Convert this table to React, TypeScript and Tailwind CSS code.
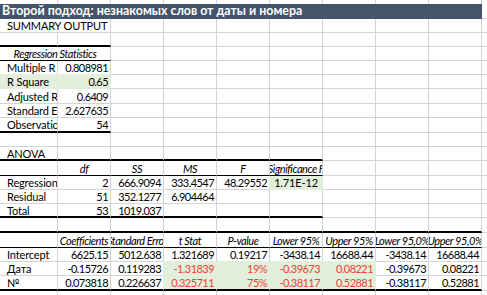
import React from "react";

// column widths: A..J (the last one is cut by the window)
const widths = [58, 53, 53, 53, 53, 53, 53, 53, 53, 53];

type Cell = {
  t?: string;
  a?: "l" | "r" | "c";
  i?: boolean;
  g?: boolean;
  red?: boolean;
  span?: number;
};

type Row = {
  h: number;
  cells: Cell[];
  line?: "thick" | "thin";
  lineTo?: number; // number of columns the black line covers
};

const R = (...v: string[]): Cell[] => v.map((t, idx) => ({ t, a: idx === 0 ? "l" : "r" }));

const rows: Row[] = [
  { h: 14, cells: [{ t: "SUMMARY OUTPUT", span: 2 }] },
  { h: 14, cells: [], line: "thick", lineTo: 2 },
  { h: 14, cells: [{ t: "Regression Statistics", a: "c", i: true, span: 2 }], line: "thin", lineTo: 2 },
  { h: 14, cells: R("Multiple R", "0.808981") },
  { h: 14, cells: R("R Square", "0.65").map((c) => ({ ...c, g: true })) },
  { h: 15, cells: R("Adjusted R Square", "0.6409") },
  { h: 14, cells: R("Standard Error", "2.627635") },
  { h: 15, cells: R("Observations", "54"), line: "thick", lineTo: 2 },
  { h: 14, cells: [] },
  { h: 14, cells: [{ t: "ANOVA" }], line: "thick", lineTo: 6 },
  {
    h: 15,
    cells: [{}, ...["df", "SS", "MS", "F", "Significance F"].map((t) => ({ t, a: "c" as const, i: true }))],
    line: "thin",
    lineTo: 6,
  },
  {
    h: 14,
    cells: [...R("Regression", "2", "666.9094", "333.4547", "48.29552"), { t: "1.71E-12", a: "c", g: true }],
  },
  { h: 14, cells: R("Residual", "51", "352.1277", "6.904464") },
  { h: 14, cells: R("Total", "53", "1019.037"), line: "thick", lineTo: 6 },
  { h: 15, cells: [], line: "thick", lineTo: 9 },
  {
    h: 15,
    cells: [
      {},
      ...["Coefficients", "Standard Error", "t Stat", "P-value", "Lower 95%", "Upper 95%", "Lower 95,0%", "Upper 95,0%"].map(
        (t) => ({ t, a: "c" as const, i: true })
      ),
    ],
    line: "thin",
    lineTo: 9,
  },
  {
    h: 14,
    cells: R("Intercept", "6625.15", "5012.638", "1.321689", "0.19217", "-3438.14", "16688.44", "-3438.14", "16688.44"),
  },
  {
    h: 14,
    cells: R("Дата", "-0.15726", "0.119283", "-1.31839", "19%", "-0.39673", "0.08221", "-0.39673", "0.08221").map(
      (c, idx) => (idx >= 3 && idx <= 6 ? { ...c, g: true, red: true } : c)
    ),
  },
  {
    h: 15,
    cells: R("№", "0.073818", "0.226637", "0.325711", "75%", "-0.38117", "0.52881", "-0.38117", "0.52881").map(
      (c, idx) => (idx >= 3 && idx <= 6 ? { ...c, g: true, red: true } : c)
    ),
    line: "thick",
    lineTo: 9,
  },
  { h: 14, cells: [] },
];

// expand spans into one entry per column
const layout = (cells: Cell[]) => {
  const out: { cell: Cell; col: number; w: number; n: number }[] = [];
  let col = 0;
  while (col < widths.length) {
    const cell = cells[out.length] ?? {};
    const n = cell.span ?? 1;
    const w = widths.slice(col, col + n).reduce((s, x) => s + x, 0);
    out.push({ cell, col, w, n });
    col += n;
  }
  return out;
};

function SheetRow({ row, below }: { row: Row; below?: Row }) {
  const items = layout(row.cells);
  const belowItems = below ? layout(below.cells) : [];
  const greenAt = (list: typeof items, col: number) =>
    list.some((it) => it.cell.g && col >= it.col && col < it.col + it.n);

  return (
    <div className="flex" style={{ height: row.h }}>
      {items.map(({ cell, col, w, n }) => {
        const last = col + n - 1;
        const green = !!cell.g;
        const nextGreen = greenAt(items, last + 1);
        const black = row.line && col < (row.lineTo ?? 0);
        const belowGreen = greenAt(belowItems, col);

        const right = green || nextGreen ? "border-r-[#e2efda]" : "border-r-[#d4d4d4]";
        const bottom = black
          ? row.line === "thick"
            ? "border-b-2 border-b-black"
            : "border-b border-b-black"
          : green || belowGreen
          ? "border-b border-b-[#e2efda]"
          : "border-b border-b-[#d4d4d4]";

        const align =
          cell.a === "r"
            ? "justify-end pr-[2px]"
            : cell.a === "c"
            ? "justify-center"
            : col === 0
            ? "justify-start pl-[7px]"
            : "justify-start pl-[2px]";

        const isNum = cell.a === "r" && col > 0;

        return (
          <div
            key={col}
            className={`flex shrink-0 items-center overflow-hidden border-r ${right} ${bottom} ${
              green ? "bg-[#e2efda]" : "bg-white"
            } ${align}`}
            style={{ width: w }}
          >
            {cell.t && (
              <span
                className={`shrink-0 whitespace-nowrap leading-none ${
                  cell.i ? "italic tracking-[-0.45px]" : isNum ? "tracking-[-0.55px]" : "tracking-[-0.15px]"
                } ${cell.red ? "text-[#ef4136]" : "text-black"}`}
              >
                {cell.t}
              </span>
            )}
          </div>
        );
      })}
    </div>
  );
}

export default function App() {
  return (
    <div className="h-[295px] w-[487px] overflow-hidden bg-white font-['Lato','Open_Sans',sans-serif] text-[11px]">
      {/* sliver of the row above the title */}
      <div className="flex h-[4px]">
        {widths.map((w, k) => (
          <div key={k} className="shrink-0 border-r border-r-[#d4d4d4]" style={{ width: w }} />
        ))}
      </div>

      {/* title bar */}
      <div className="flex h-[15px]">
        <div className="flex w-[482px] shrink-0 items-center bg-[#44546a] pl-[2px]">
          <span className="whitespace-nowrap text-[12.4px] font-bold leading-none text-white">
            Второй подход: незнакомых слов от даты и номера
          </span>
        </div>
        <div className="w-[53px] shrink-0 border-b border-b-[#d4d4d4]" />
      </div>

      {rows.map((row, k) => (
        <SheetRow key={k} row={row} below={rows[k + 1]} />
      ))}
    </div>
  );
}
